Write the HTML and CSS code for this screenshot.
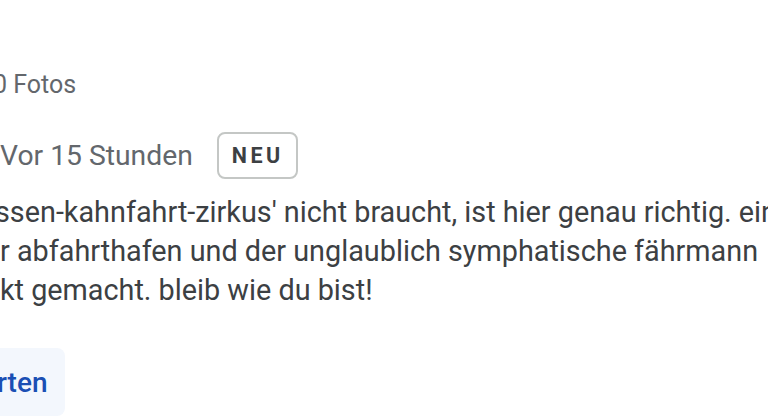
FILE: index.html
```html
<!DOCTYPE html>
<html lang="de">
  <head>
    <meta charset="utf-8">
    <meta name="viewport" content="width=device-width, initial-scale=1.0">
    <title>Rezension</title>
    <link rel="stylesheet" href="styles.css">
  </head>
  <body>
    <div class="review">
      <div class="review__author-meta">0 Fotos</div>
      <div class="review__when">
        <span class="review__date">Vor 15 Stunden</span>
        <span class="review__badge">NEU</span>
      </div>
      <p class="review__text">ssen-kahnfahrt-zirkus' nicht braucht, ist hier genau richtig. ein<br>r abfahrthafen und der unglaublich symphatische fährmann<br>kt gemacht. bleib wie du bist!</p>
      <div class="review__actions">
        <button class="review__reply">rten</button>
      </div>
    </div>
  </body>
</html>
```

FILE: styles.css
```css
*, *::after, *::before {
  margin: 0;
  padding: 0;
  box-sizing: border-box;
}
html, body {
  width: 100%;
  height: 100%;
  overflow: hidden;
  background-color: #fff;
}
body {
  font-family: Roboto, "Liberation Sans", sans-serif;
}
.review {
  display: flex;
  flex-direction: column;
  padding-top: 70px;
}
.review__author-meta {
  margin-left: -7px;
  font-size: 25px;
  line-height: 30px;
  color: #63676c;
}
.review__when {
  display: flex;
  align-items: center;
  gap: 24px;
  margin-top: 32px;
}
.review__date {
  font-size: 28.3px;
  line-height: 38px;
  color: #63676c;
}
.review__badge {
  padding: 0 12px 0 13px;
  height: 47px;
  display: flex;
  align-items: center;
  border: 2px solid #c4c7c5;
  border-radius: 8px;
  font-size: 21.5px;
  font-weight: 700;
  letter-spacing: 3.5px;
  color: #3c4043;
}
.review__text {
  margin-top: 14px;
  text-indent: -5px;
  font-size: 28.8px;
  line-height: 39px;
  white-space: nowrap;
  color: #3c4043;
}
.review__actions {
  display: flex;
  margin-top: 38px;
}
.review__reply {
  margin-left: -43px;
  height: 68px;
  padding: 0 17px 0 40px;
  border: none;
  border-radius: 8px;
  background-color: #f3f7fd;
  font-family: inherit;
  font-size: 28px;
  font-weight: 500;
  color: #1a4fb4;
}
```
